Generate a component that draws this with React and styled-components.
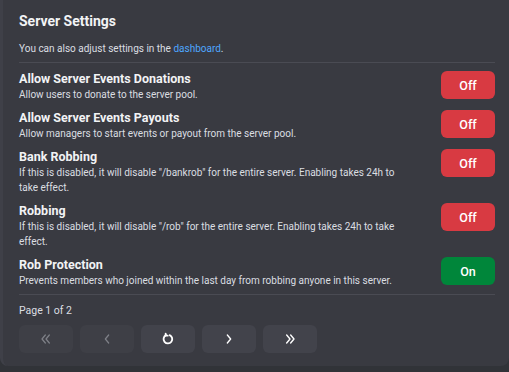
import styled, { createGlobalStyle } from "styled-components";
import * as React from "react";

const GlobalStyle = createGlobalStyle`
  html, body {
    margin: 0;
    background: #313338;
    font-family: Roboto, "Noto Sans", sans-serif;
  }
`;

const settings = [
  { title: "Allow Server Events Donations", desc: "Allow users to donate to the server pool.", on: false },
  { title: "Allow Server Events Payouts", desc: "Allow managers to start events or payout from the server pool.", on: false },
  { title: "Bank Robbing", desc: 'If this is disabled, it will disable "/bankrob" for the entire server. Enabling takes 24h to take effect.', on: false },
  { title: "Robbing", desc: 'If this is disabled, it will disable "/rob" for the entire server. Enabling takes 24h to take effect.', on: false },
  { title: "Rob Protection", desc: "Prevents members who joined within the last day from robbing anyone in this server.", on: true },
];

const Icon = ({ children, weight = 2 }) => (
  <svg width="16" height="16" viewBox="0 0 24 24" fill="none" stroke="currentColor" strokeWidth={weight} strokeLinecap="round" strokeLinejoin="round">
    {children}
  </svg>
);

const App = () => {
  return (
    <>
      <GlobalStyle />
      <Embed>
        <Title>Server Settings</Title>
        <Note>
          You can also adjust settings in the <a>dashboard</a>.
        </Note>
        <Divider />
        <List>
          {settings.map((s) => (
            <Row key={s.title}>
              <div>
                <RowTitle>{s.title}</RowTitle>
                <RowDesc>{s.desc}</RowDesc>
              </div>
              <Toggle $on={s.on}>{s.on ? "On" : "Off"}</Toggle>
            </Row>
          ))}
        </List>
        <Divider $gap={6} />
        <Page>Page 1 of 2</Page>
        <Pager>
          <NavButton disabled>
            <Icon weight={1.8}><path d="M11 18l-5-6 5-6" /><path d="M17 18l-5-6 5-6" /></Icon>
          </NavButton>
          <NavButton disabled>
            <Icon weight={1.8}><path d="M14.5 18l-5-6 5-6" /></Icon>
          </NavButton>
          <NavButton>
            <Icon weight={2.8}><path d="M14.5 6.2A6.5 6.5 0 1 1 9 6.3" /><path d="M8.5 4v3h3" /></Icon>
          </NavButton>
          <NavButton>
            <Icon><path d="M9.5 18l5-6-5-6" /></Icon>
          </NavButton>
          <NavButton>
            <Icon><path d="M7 18l5-6-5-6" /><path d="M13 18l5-6-5-6" /></Icon>
          </NavButton>
        </Pager>
      </Embed>
    </>
  );
};

export default App;

const Embed = styled.div`
  box-sizing: border-box;
  margin: 0 0 6px 0;
  padding: 11px 14px 12px 16px;
  width: 509px;
  height: 366px;
  background: #393a41;
  border-left: 3px solid #3f4048;
  border-radius: 0 0 8px 8px;
`;

const Title = styled.h2`
  margin: 0;
  font-size: 14px;
  line-height: 20px;
  font-weight: 700;
  color: #f2f3f5;
`;

const Note = styled.p`
  margin: 11px 0 0 0;
  font-size: 10px;
  line-height: 14px;
  color: #dbdee1;
  a {
    color: #4ea6ff;
  }
`;

const Divider = styled.div`
  height: 1px;
  background: #4a4b53;
  margin: ${(p) => p.$gap || 6}px 0 0 0;
  width: 476px;
`;

const List = styled.div`
  display: flex;
  flex-direction: column;
`;

const Row = styled.div`
  display: flex;
  align-items: flex-start;
  justify-content: space-between;
  padding-top: 7px;
  > div {
    width: 388px;
  }
`;

const RowTitle = styled.div`
  font-size: 12.5px;
  line-height: 17px;
  font-weight: 700;
  color: #f2f3f5;
`;

const RowDesc = styled.div`
  font-size: 10px;
  line-height: 15px;
  color: #dbdee1;
`;

const Toggle = styled.button`
  margin-top: 1px;
  width: 54px;
  height: 28px;
  border: 0;
  border-radius: 6px;
  background: ${(p) => (p.$on ? "#00863a" : "#d83a42")};
  color: #ffffff;
  font-family: inherit;
  font-size: 12.5px;
  font-weight: 500;
`;

const Page = styled.div`
  margin-top: 9px;
  font-size: 10.5px;
  line-height: 14px;
  color: #dbdee1;
`;

const Pager = styled.div`
  display: flex;
  gap: 7px;
  margin-top: 7px;
`;

const NavButton = styled.button`
  width: 54px;
  height: 28px;
  border: 0;
  border-radius: 6px;
  background: #42434b;
  color: #ffffff;
  display: flex;
  align-items: center;
  justify-content: center;
  &:disabled {
    background: #3e3f46;
    color: #7f8188;
  }
`;
